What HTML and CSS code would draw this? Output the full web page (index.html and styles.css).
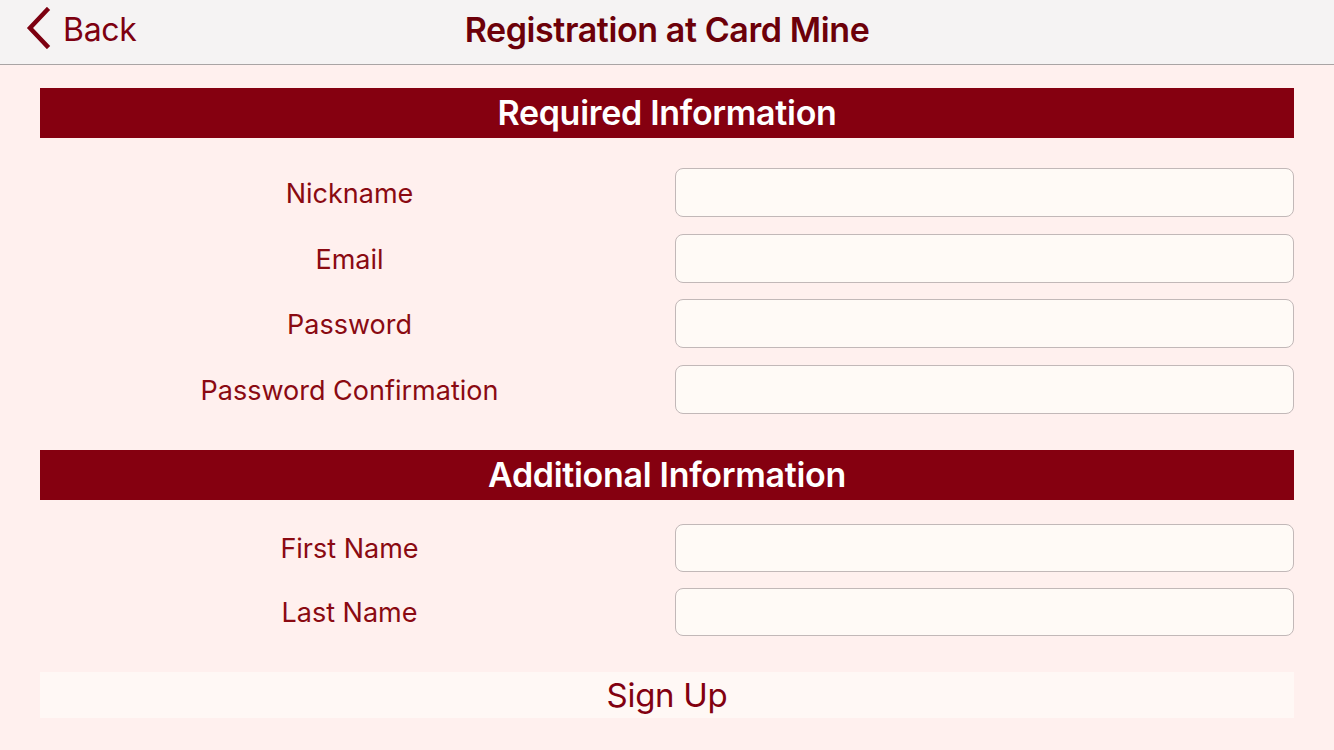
FILE: index.html
```html
<!DOCTYPE html>
<html>
<head>
<meta charset="utf-8">
<link rel="stylesheet" href="styles.css">
</head>
<body>
<header class="navbar">
  <a class="back" href="#">
    <svg class="chev" width="26" height="42" viewBox="0 0 26 42"><path d="M22 3 L5 21 L22 39" fill="none" stroke="#7d0010" stroke-width="4.5" stroke-linecap="square"/></svg>
    <span>Back</span>
  </a>
  <h1 class="title">Registration at Card Mine</h1>
</header>
<main class="content">
  <h2 class="section first">Required Information</h2>
  <div class="form">
    <label class="lbl">Nickname</label><div class="field"></div>
    <label class="lbl">Email</label><div class="field"></div>
    <label class="lbl">Password</label><div class="field"></div>
    <label class="lbl">Password Confirmation</label><div class="field"></div>
  </div>
  <h2 class="section second">Additional Information</h2>
  <div class="form second-form">
    <label class="lbl">First Name</label><div class="field"></div>
    <label class="lbl">Last Name</label><div class="field"></div>
  </div>
  <button class="signup">Sign Up</button>
</main>
</body>
</html>
```
FILE: styles.css
```css
* { box-sizing: border-box; }
html, body { margin: 0; padding: 0; }
body {
  width: 1334px;
  height: 750px;
  background: #fff0ee;
  font-family: Inter, "Noto Sans", sans-serif;
  overflow: hidden;
}
.navbar {
  height: 65px;
  background: #f5f3f3;
  border-bottom: 1px solid #a9a4a4;
  display: flex;
  align-items: center;
  justify-content: center;
  position: relative;
}
.back {
  position: absolute;
  left: 25px;
  top: 7px;
  display: flex;
  align-items: center;
  gap: 12px;
  text-decoration: none;
  color: #7d0010;
  font-size: 32px;
  letter-spacing: -0.3px;
}
.chev { display: block; }
.back span { margin-top: 2px; }
.title {
  margin: 0;
  font-size: 34px;
  font-weight: 600;
  color: #6c0009;
  letter-spacing: -0.4px;
  padding-bottom: 5px;
}
.content {
  padding: 0 40px;
}
.section {
  margin: 0;
  height: 50px;
  background: #850010;
  color: #fff;
  font-size: 34px;
  font-weight: 600;
  letter-spacing: -0.3px;
  display: flex;
  align-items: center;
  justify-content: center;
  padding-bottom: 1px;
}
.section.first { margin-top: 23px; }
.section.second { margin-top: 36px; }
.form {
  display: grid;
  grid-template-columns: 1fr 1fr;
  column-gap: 16px;
  row-gap: 16.67px;
  margin-top: 30px;
  align-items: center;
}
.form .field { height: 49px; }
.second-form { margin-top: 24px; row-gap: 16px; }
.second-form .field { height: 48px; }
.lbl {
  text-align: center;
  font-size: 27px;
  color: #8a0a12;
  letter-spacing: 0;
  padding-top: 2px;
}
.field {
  background: #fffaf6;
  border: 1px solid #c2b8b8;
  border-radius: 8px;
}
.signup {
  display: block;
  width: 100%;
  height: 46px;
  margin-top: 36px;
  border: 0;
  background: #fff8f5;
  color: #820010;
  font-family: Inter, "Noto Sans", sans-serif;
  font-size: 33px;
  letter-spacing: -0.3px;
  padding: 0;
}
```
